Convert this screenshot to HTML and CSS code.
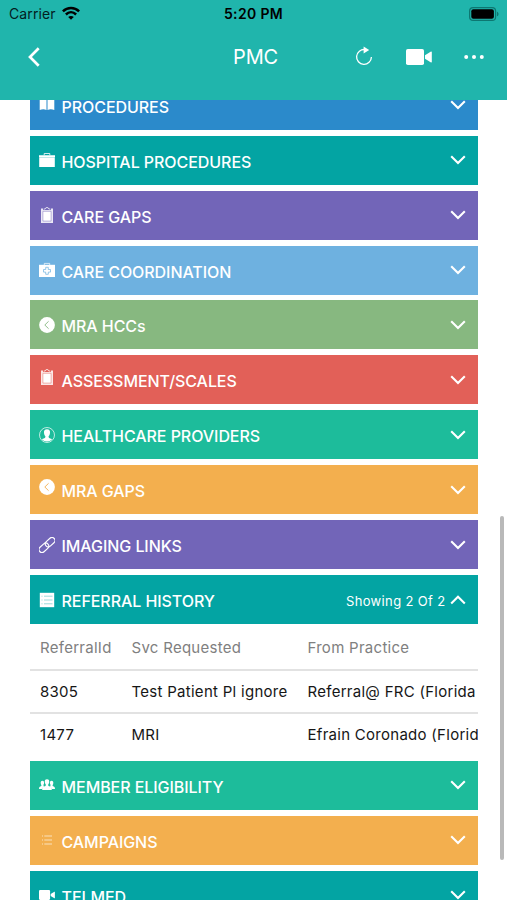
FILE: index.html
```html
<!DOCTYPE html>
<html lang="en">

<head>
    <meta charset="UTF-8">
    <meta name="viewport" content="width=device-width, initial-scale=1.0">
    <title>PMC</title>
    <link rel="stylesheet" href="styles.css">
</head>

<body>
    <svg class="sprite" aria-hidden="true">
        <symbol id="down" viewBox="0 0 16 10"><path d="M1.2 1.2 8 8l6.800-6.800" fill="none" stroke="currentColor" stroke-width="2.100"/></symbol>
        <symbol id="up" viewBox="0 0 16 10"><path d="M1.200 8.500 8 1.700l6.800 6.800" fill="none" stroke="currentColor" stroke-width="2.100"/></symbol>
        <symbol id="book" viewBox="0 0 16 16"><path d="M.7 1.500C3 .8 5.500.8 7.500 2v11c-2-.9-4.500-.9-6.800 0zM15.300 1.500C13 .8 10.500.8 8.500 2v11c2-.9 4.500-.9 6.800 0z" fill="currentColor"/></symbol>
        <symbol id="briefcase" viewBox="0 0 16 16"><path d="M5.200 3.200V1.500h5.600v1.700" fill="none" stroke="currentColor" stroke-width=".8"/><path d="M0 3.200h16v2H0zM.2 5.500h15.600V15H.2z" fill="currentColor"/></symbol>
        <symbol id="clipboard" viewBox="0 0 16 16"><path d="M2 1.500h2.200V3h7.600V1.500H14V16H2z" fill="currentColor" opacity=".85"/><path d="M5 2.200 6.800 1.500C6.800-.3 9.200-.3 9.200 1.500l1.800.7" fill="none" stroke="currentColor" stroke-width=".8"/><path d="M3.900 4.300h8.200v9.800H3.900z" fill="currentColor" stroke="var(--bar)" stroke-width=".45"/></symbol>
        <symbol id="medkit" viewBox="0 0 16 16"><path d="M5.300 3.500V1.400h5.400v2.100" fill="none" stroke="currentColor" stroke-width=".7"/><path d="M0 2.800h16V15H0z" fill="currentColor"/><path d="M6.700 5.300h2.600v2.200h2.200v2.600H9.300v2.200H6.700v-2.200H4.500V7.500h2.200z" fill="none" stroke="var(--bar)" stroke-width=".7"/></symbol>
        <symbol id="back-circle" viewBox="0 0 16 16"><circle cx="8" cy="8" r="7.900" fill="currentColor"/><path d="M9.600 4.300 5.800 8l3.800 3.700" fill="none" stroke="var(--bar)" stroke-width=".9"/></symbol>
        <symbol id="contact" viewBox="0 0 16 16"><circle cx="8" cy="8" r="7.500" fill="none" stroke="currentColor" stroke-width=".7"/><path d="M8 2.300c2.300 0 3.200 1.500 3 3.400-.1 1.800-.8 2.900-1.400 3.500 0 1.700.5 1.800 3.500 3-2.800 3-7.400 3-10.200 0 3-1.200 3.500-1.300 3.500-3-.6-.6-1.300-1.700-1.400-3.500-.2-1.900.7-3.400 3-3.400z" fill="currentColor"/></symbol>
        <symbol id="link" viewBox="0 0 16 16"><g fill="none" stroke="currentColor" stroke-width="1.150" transform="rotate(-42 8 8)"><rect x="-1.700" y="5" width="11" height="6" rx="3"/><rect x="6.700" y="5" width="11" height="6" rx="3"/></g></symbol>
        <symbol id="list-box" viewBox="0 0 16 16"><path d="M.8.800h14.400v14.400H.8z" fill="currentColor"/><path d="M2.500 4.200h1M5 4.200h8.500M2.500 8h1M5 8h8.500M2.500 11.800h1M5 11.800h8.500" stroke="var(--bar)" stroke-width=".4"/></symbol>
        <symbol id="people" viewBox="0 0 16 16"><g fill="currentColor"><path d="M3.400 3.800c1.400 0 1.900 1.100 1.700 2.300-.1 1-.5 1.500-.7 1.900 0 .9.300 1 1 1.200-1.300.7-1.800 1.500-1.900 2.800H0c.1-2.100.5-2.300 2.400-3 0-.5 0-.7-.1-1-.3-.4-.5-1-.6-1.900-.2-1.200.4-2.300 1.700-2.300zM12.600 3.800c-1.400 0-1.900 1.100-1.700 2.300.1 1 .5 1.500.7 1.900 0 .9-.3 1-1 1.200 1.300.7 1.800 1.500 1.900 2.800H16c-.1-2.100-.5-2.300-2.400-3 0-.5 0-.7.1-1 .3-.4.5-1 .6-1.900.2-1.200-.4-2.300-1.700-2.300z"/><path d="M8 2.300c1.800 0 2.400 1.300 2.200 2.800-.1 1.200-.5 2-1 2.500 0 1.600.3 1.500 1.800 2 1.300.5 1.700 1.300 1.800 3.400H3.200c.1-2.100.5-2.900 1.800-3.400 1.500-.5 1.800-.4 1.800-2-.5-.5-.9-1.300-1-2.500C5.600 3.600 6.200 2.300 8 2.300z"/></g></symbol>
        <symbol id="list" viewBox="0 0 16 16"><path d="M3 4h1M5.300 4H13M3 8h1M5.300 8H13M3 12h1M5.300 12H13" stroke="currentColor" stroke-width=".7" opacity=".9"/></symbol>
        <symbol id="video" viewBox="0 0 26 16"><rect width="18" height="16" rx="1.800" fill="currentColor"/><path d="M19 6.300 25 2.600c.4-.2.800 0 .8.400v10c0 .4-.4.600-.8.400l-6-3.700z" fill="currentColor"/></symbol>
    </svg>

    <header class="header">
        <div class="status">
            <div class="carrier">
                <span>Carrier</span>
                <svg class="wifi" viewBox="0 0 18 14"><g fill="none" stroke="currentColor" stroke-width="2.500"><path d="M.9 5.300c4.600-4.500 11.600-4.500 16.200 0M3.900 8.500c3-2.900 7.200-2.900 10.200 0"/></g><path d="M9 13.800 6.200 11c1.600-1.500 4-1.500 5.600 0z" fill="currentColor"/></svg>
            </div>
            <div class="time">5:20 PM</div>
            <svg class="battery" viewBox="0 0 30 14"><rect x=".6" y=".6" width="26" height="12.800" rx="3.500" fill="none" stroke="#0d7771" stroke-width="1.200"/><rect x="2.300" y="2.300" width="22.600" height="9.400" rx="2" fill="#000"/><path d="M28 4.700c2 .6 2 4 0 4.600z" fill="#0d7771"/></svg>
        </div>
        <nav class="nav">
            <svg class="back" viewBox="0 0 12 20"><path d="M10.700 1.300 2 10l8.700 8.700" fill="none" stroke="#fff" stroke-width="2.700"/></svg>
            <h1 class="title">PMC</h1>
            <div class="actions">
                <svg class="refresh" viewBox="0 0 18 20"><path d="M10 3.600A7.400 7.400 0 1 0 16.400 11" fill="none" stroke="#fff" stroke-width="1.300"/><path d="M8.600.4 14.200 4 8.600 7.500z" fill="#fff"/></svg>
                <svg class="camera"><use href="#video"/></svg>
                <svg class="more" viewBox="0 0 20 4"><g fill="#fff"><circle cx="2.200" cy="2" r="2"/><circle cx="10" cy="2" r="2"/><circle cx="17.800" cy="2" r="2"/></g></svg>
            </div>
        </nav>
    </header>

    <main class="content">
        <div class="bar blue"><svg class="icon"><use href="#book"/></svg><span class="name">PROCEDURES</span><svg class="arrow"><use href="#down"/></svg></div>
        <div class="bar teal"><svg class="icon"><use href="#briefcase"/></svg><span class="name">HOSPITAL PROCEDURES</span><svg class="arrow"><use href="#down"/></svg></div>
        <div class="bar purple"><svg class="icon"><use href="#clipboard"/></svg><span class="name">CARE GAPS</span><svg class="arrow"><use href="#down"/></svg></div>
        <div class="bar sky"><svg class="icon"><use href="#medkit"/></svg><span class="name">CARE COORDINATION</span><svg class="arrow"><use href="#down"/></svg></div>
        <div class="bar olive"><svg class="icon"><use href="#back-circle"/></svg><span class="name">MRA HCCs</span><svg class="arrow"><use href="#down"/></svg></div>
        <div class="bar red"><svg class="icon raised"><use href="#clipboard"/></svg><span class="name">ASSESSMENT/SCALES</span><svg class="arrow"><use href="#down"/></svg></div>
        <div class="bar green"><svg class="icon"><use href="#contact"/></svg><span class="name">HEALTHCARE PROVIDERS</span><svg class="arrow"><use href="#down"/></svg></div>
        <div class="bar orange"><svg class="icon raised"><use href="#back-circle"/></svg><span class="name">MRA GAPS</span><svg class="arrow"><use href="#down"/></svg></div>
        <div class="bar purple"><svg class="icon"><use href="#link"/></svg><span class="name">IMAGING LINKS</span><svg class="arrow"><use href="#down"/></svg></div>
        <div class="bar teal open"><svg class="icon"><use href="#list-box"/></svg><span class="name">REFERRAL HISTORY</span><span class="count">Showing 2 Of 2</span><svg class="arrow"><use href="#up"/></svg></div>
        <div class="table">
            <div class="row head"><span>ReferralId</span><span>Svc Requested</span><span>From Practice</span></div>
            <div class="row"><span>8305</span><span>Test Patient Pl ignore</span><span>Referral@ FRC (Florida</span></div>
            <div class="row"><span>1477</span><span>MRI</span><span>Efrain Coronado (Florid</span></div>
        </div>
        <div class="bar green"><svg class="icon"><use href="#people"/></svg><span class="name">MEMBER ELIGIBILITY</span><svg class="arrow"><use href="#down"/></svg></div>
        <div class="bar orange"><svg class="icon"><use href="#list"/></svg><span class="name">CAMPAIGNS</span><svg class="arrow"><use href="#down"/></svg></div>
        <div class="bar teal"><svg class="icon"><use href="#video"/></svg><span class="name">TELMED</span><svg class="arrow"><use href="#down"/></svg></div>
    </main>
    <div class="scrollbar"></div>
</body>

</html>
```
FILE: styles.css
```css
* {
    box-sizing: border-box;
}

body {
    position: relative;
    display: flex;
    flex-direction: column;
    width: 507px;
    height: 900px;
    margin: 0;
    overflow: hidden;
    background: #fff;
    font-family: Inter, "Liberation Sans", sans-serif;
}

svg {
    flex: none;
    display: block;
}

.sprite {
    position: absolute;
    width: 0;
    height: 0;
}

.header {
    flex: none;
    height: 100px;
    background: #20b5ac;
}

.status {
    display: grid;
    grid-template-columns: 1fr auto 1fr;
    align-items: center;
    height: 27px;
    padding: 0 8px 0 9px;
    font-size: 14px;
    color: #03201f;
}

.carrier {
    display: flex;
    align-items: center;
    gap: 6px;
    letter-spacing: 0.1px;
}

.wifi {
    width: 18px;
    height: 14px;
    margin-top: -2px;
    color: #000;
}

.time {
    margin-right: 1px;
    font-weight: 600;
    letter-spacing: 0.350px;
    color: #000;
}

.battery {
    width: 30px;
    height: 14px;
    justify-self: end;
}

.nav {
    display: grid;
    grid-template-columns: 1fr auto 1fr;
    align-items: center;
    height: 59px;
    padding: 0 23px 0 28px;
    color: #fff;
}

.back {
    width: 12px;
    height: 20px;
}

.title {
    margin: 0 1px 0 0;
    font-size: 20px;
    font-weight: 400;
    letter-spacing: -0.200px;
}

.actions {
    display: flex;
    align-items: center;
    justify-content: flex-end;
}

.refresh {
    width: 18px;
    height: 20px;
    margin: 0 33px 2px 0;
}

.camera {
    width: 26px;
    height: 16px;
    margin-right: 32px;
}

.more {
    width: 20px;
    height: 4px;
}

.content {
    flex: 1;
    min-height: 0;
    padding: 0 29.500px 0 30px;
    overflow: hidden;
}

.bar {
    display: flex;
    align-items: center;
    height: 49px;
    margin-bottom: 5.950px;
    padding: 0 12px 0 9px;
    background: var(--bar);
    color: #fff;
}

.bar:first-child {
    margin-top: -19.300px;
}

.bar.open {
    margin-bottom: 0;
}

.blue { --bar: #2b8acb; }
.teal { --bar: #03a4a3; }
.purple { --bar: #7265b8; }
.sky { --bar: #6eb1e0; }
.olive { --bar: #87b880; }
.red { --bar: #e26058; }
.green { --bar: #1dbc9b; }
.orange { --bar: #f3af4e; }

.icon {
    width: 16px;
    height: 16px;
    margin: 0 6.500px 0 0;
}

.icon.raised {
    margin-bottom: 6px;
}

.name {
    flex: 1;
    padding-top: 3px;
    font-size: 16px;
    font-weight: 450;
    letter-spacing: -0.060px;
}

.count {
    padding-top: 3px;
    margin-right: 4px;
    font-size: 13px;
    letter-spacing: 0.350px;
}

.arrow {
    width: 16px;
    height: 10px;
}

.table {
    height: 136.700px;
    overflow: hidden;
    font-size: 15px;
    letter-spacing: 0.280px;
    color: #161616;
}

.row {
    display: grid;
    grid-template-columns: 91.500px 176px 1fr;
    align-items: center;
    height: 43px;
    padding-left: 10px;
    white-space: nowrap;
}

.row + .row {
    border-top: 2px solid #e2e2e2;
}

.row.head {
    height: 45px;
    padding-top: 1px;
    color: #808080;
}

.row:last-child {
    padding-bottom: 1px;
}

.scrollbar {
    position: absolute;
    top: 516px;
    right: 3px;
    width: 4px;
    height: 344px;
    border-radius: 2px;
    background: #b9b9b9;
}
```
